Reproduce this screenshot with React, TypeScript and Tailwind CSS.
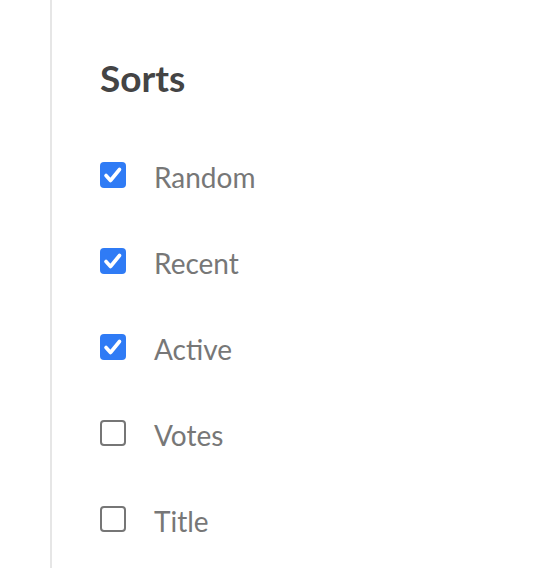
const items = [
  { label: 'Random', checked: true },
  { label: 'Recent', checked: true },
  { label: 'Active', checked: true },
  { label: 'Votes', checked: false },
  { label: 'Title', checked: false },
];

const Box = ({ checked }: { checked: boolean }) =>
  checked ? (
    <span className="flex h-[26px] w-[26px] shrink-0 items-center justify-center rounded-[4px] bg-[#2f7bf5]">
      <svg width="26" height="26" viewBox="0 0 26 26">
        <polyline points="6,13.5 10.5,18.5 19.5,7.5" fill="none" stroke="#fff" strokeWidth="3.6" strokeLinecap="round" strokeLinejoin="round" />
      </svg>
    </span>
  ) : (
    <span className="block h-[26px] w-[26px] shrink-0 rounded-[4px] border-2 border-[#767676] bg-white" />
  );

export default function App() {
  return (
    <div className="min-h-screen bg-white pl-[50px] font-['Lato',sans-serif]">
      <div className="h-[568px] border-l-2 border-[#e6e6e6] pl-[48px] pt-[59px]">
        <h2 className="text-[37px] leading-[38px] font-bold text-[#444]">Sorts</h2>
        <ul className="mt-[65px]">
          {items.map((it) => (
            <li key={it.label} className="flex h-[86px] items-start">
              <Box checked={it.checked} />
              <span className="ml-[28px] mt-[1px] text-[28px] leading-[28px] text-[#777]">{it.label}</span>
            </li>
          ))}
        </ul>
      </div>
    </div>
  );
}
